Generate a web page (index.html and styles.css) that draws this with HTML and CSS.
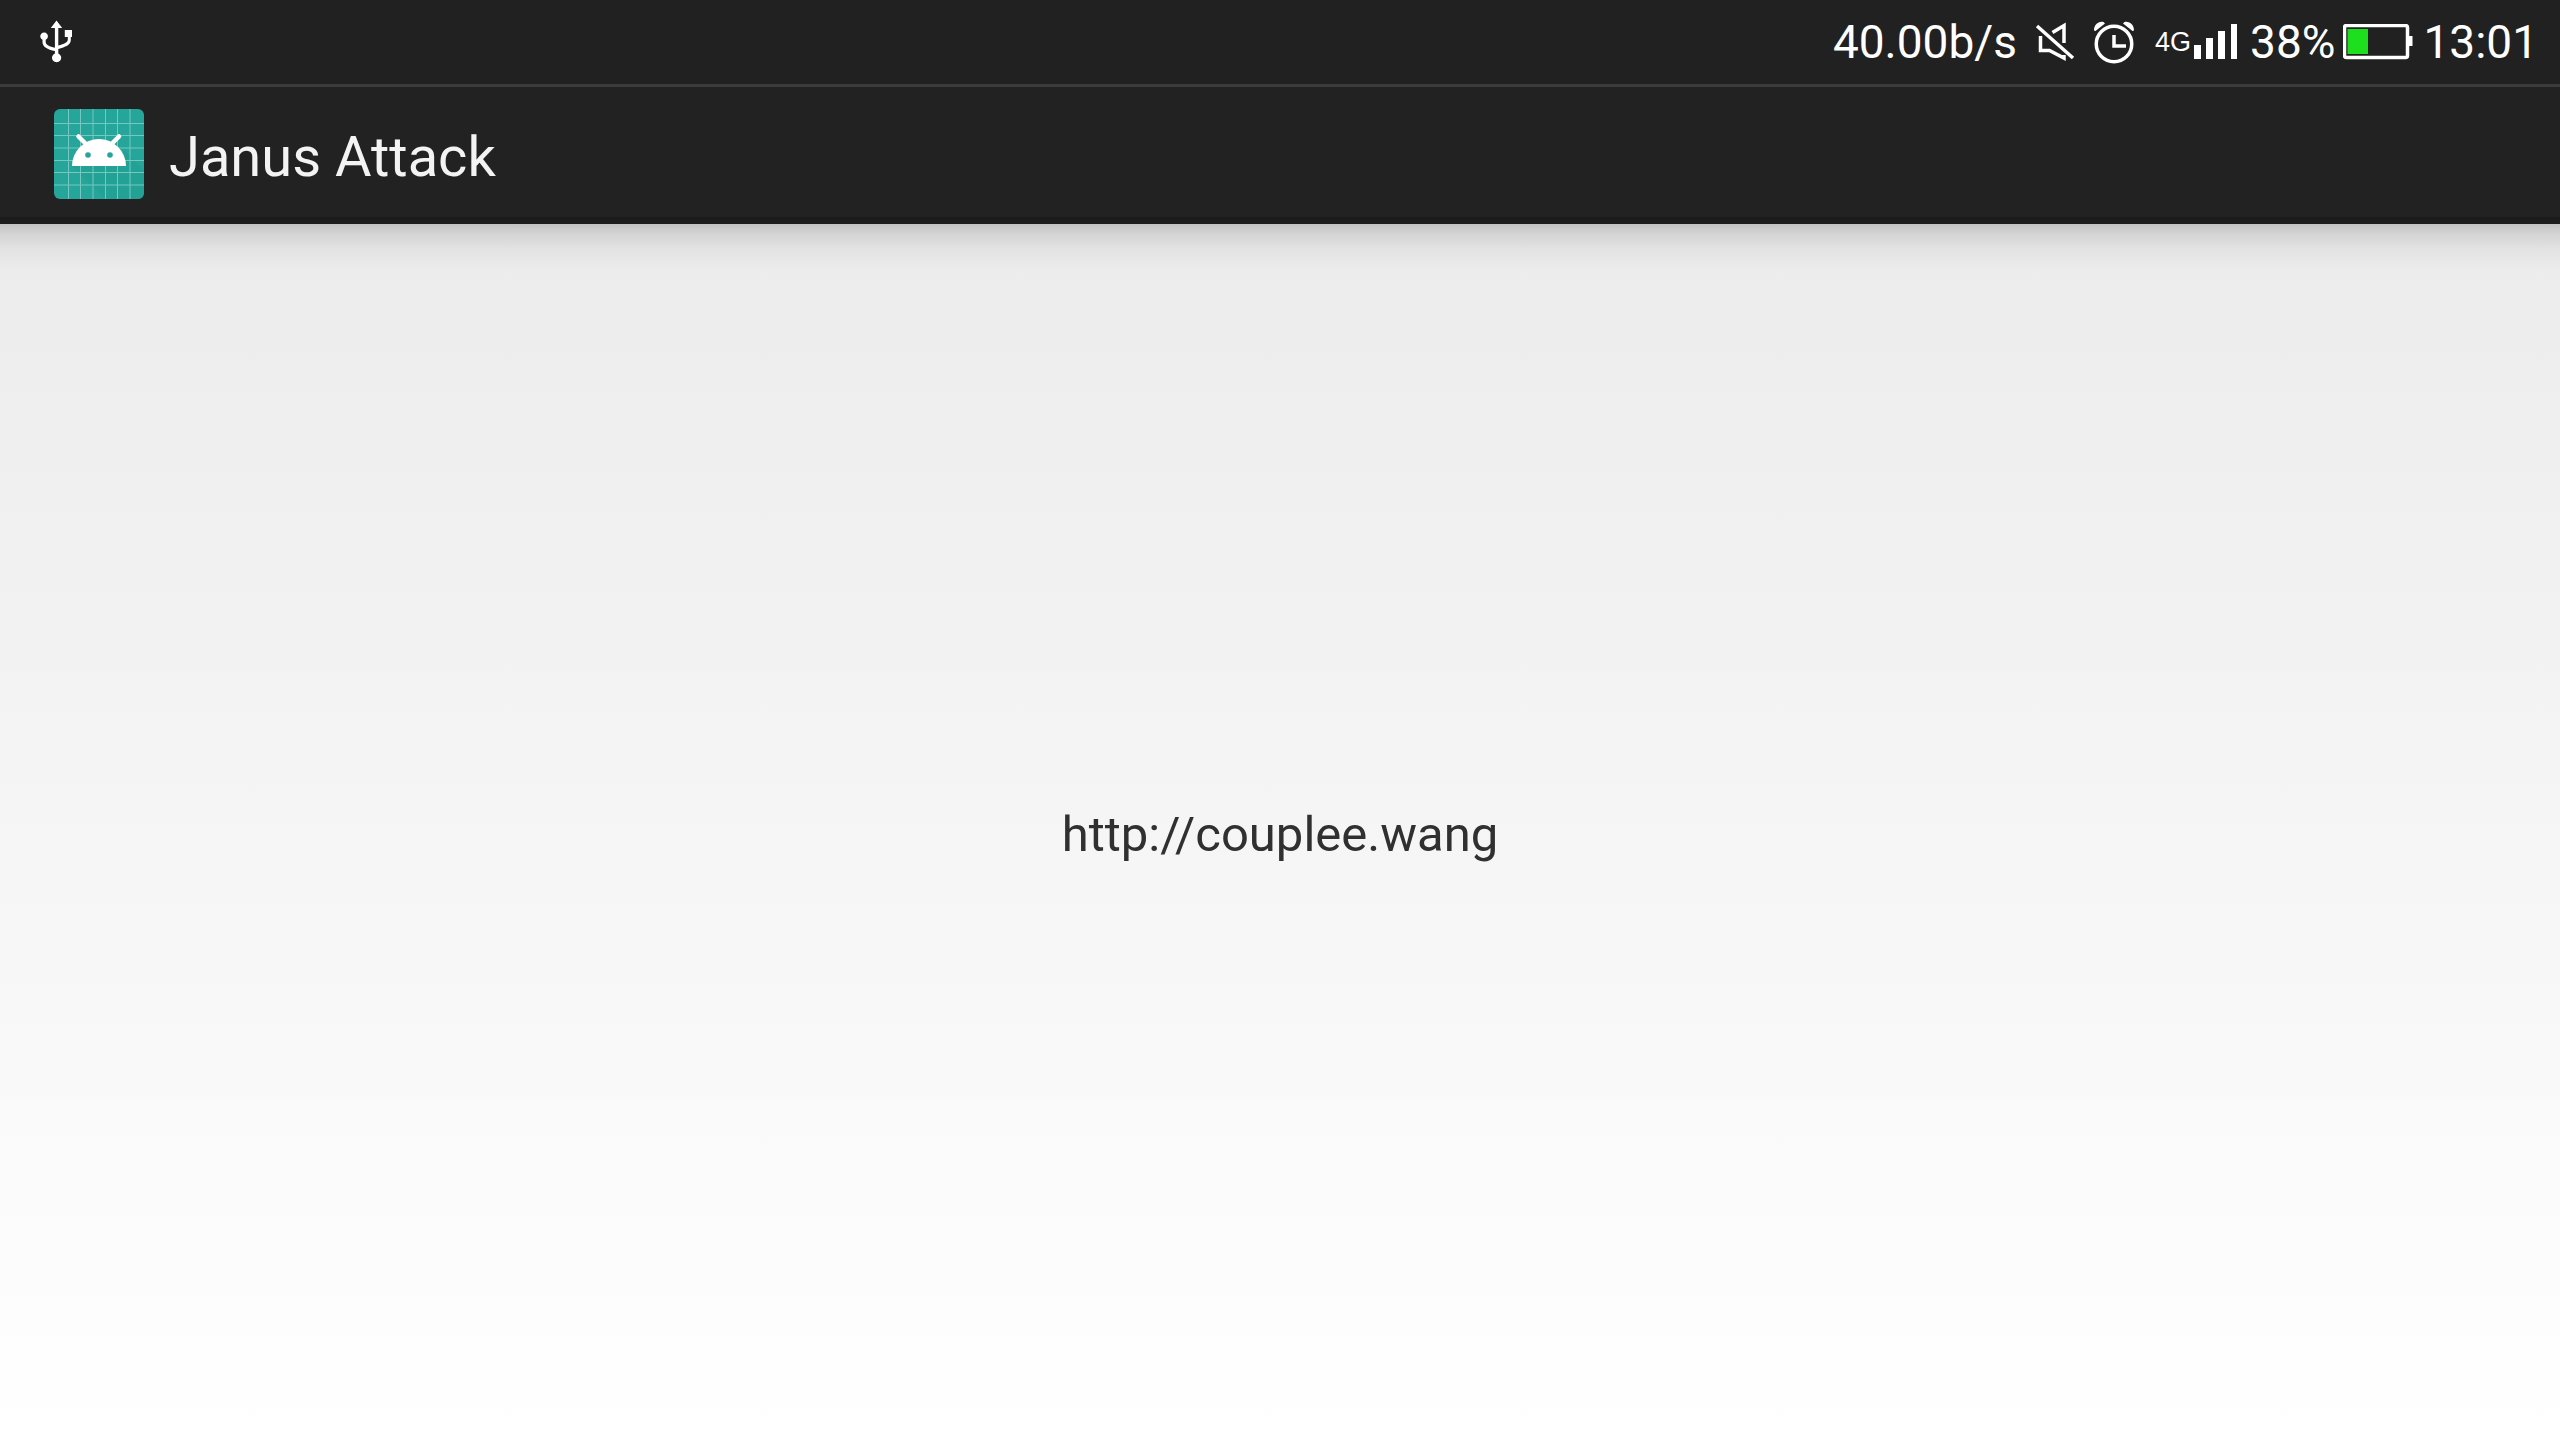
FILE: index.html
```html
<!DOCTYPE html>
<html lang="en">
<head>
<meta charset="utf-8">
<title>Janus Attack</title>
<link rel="stylesheet" href="styles.css">
</head>
<body>
<div class="status-bar">
  <svg class="usb" width="34" height="44" viewBox="0 0 34 44" aria-label="USB connected">
    <path d="M16.500 0.500l5.700 7.500h-3.900v17.500c6-1.500 9.500-3 9.500-6V17h-3v-7h7.200v7h-1.200v3c0 5-5.500 7-12.500 9v4.500a4.600 4.600 0 1 1-3.400 0v-2.500C7.500 29.500 2.500 27 2.500 22v-2.200a3.800 3.800 0 1 1 3.200 0V22c0 3 4 4.500 9.200 5.800V8H10.800z" fill="#fff"/>
  </svg>
  <div class="status-right">
    <span class="speed">40.00b/s</span>
    <svg class="mute" width="40" height="40" viewBox="0 0 40 40" aria-label="Muted" fill="none" stroke="#fff" stroke-width="3.500">
      <path d="M2 4l36 32"/>
      <path d="M5.500 14v14.500h9L29 36v-3M17.500 10.500L29 3.500V21"/>
    </svg>
    <svg class="alarm" width="42" height="44" viewBox="0 0 42 44" aria-label="Alarm set" fill="none" stroke="#fff" stroke-width="3.500">
      <circle cx="21" cy="24" r="17.750"/>
      <path d="M21 15v11h12"/>
      <path d="M1 10.500C1 5 5 1 10.500 2L12 3.500L2.500 11zM41 10.500C41 5 37 1 31.500 2L30 3.500L39.500 11z" fill="#fff" stroke="none"/>
    </svg>
    <span class="network">4G</span>
    <svg class="bars" width="44" height="36" viewBox="0 0 44 36" aria-label="Signal strength" fill="#fff">
      <path d="M0 21h7v14H0zM12 14h7v21h-7zM24 7h7v28h-7zM37 0h6v35h-6z"/>
    </svg>
    <span class="percent">38%</span>
    <svg class="battery" width="70" height="36" viewBox="0 0 70 36" aria-label="Battery">
      <rect x="1.500" y="1.500" width="63" height="32" rx="2" fill="none" stroke="#fff" stroke-width="3.500"/>
      <path d="M65 12h4.500v10H65z" fill="#fff"/>
      <path d="M4.500 5H25v25H4.500z" fill="#1ddf1d"/>
    </svg>
    <time class="clock">13:01</time>
  </div>
</div>
<header class="app-bar">
  <svg class="app-icon" width="90" height="90" viewBox="0 0 90 90" aria-hidden="true">
    <rect width="90" height="90" rx="6" fill="#26a69a"/>
    <path d="M18 57l33 33h33q6 0 6-6V61L69 40 72 57z" fill="#239a8e" opacity=".4"/>
    <path d="M14.500 0v90M26.500 0v90M39 0v90M51.500 0v90M63.500 0v90M76 0v90M0 14.500h90M0 26.500h90M0 39h90M0 51.500h90M0 63.500h90M0 76h90" stroke="#75c7bf" stroke-width="1"/>
    <path d="M24.500 27.500l8 8M65 27.500l-8 8" stroke="#fff" stroke-width="4.500" stroke-linecap="round"/>
    <path d="M18 57a27 27 0 0 1 54 0z" fill="#fff"/>
    <circle cx="34" cy="46" r="2.800" fill="#26a69a"/>
    <circle cx="56" cy="46" r="2.800" fill="#26a69a"/>
  </svg>
  <h1 class="title">Janus Attack</h1>
</header>
<main class="content">
  <p class="address">http://couplee.wang</p>
</main>
</body>
</html>
```
FILE: styles.css
```css
* {
  box-sizing: border-box;
}

body {
  margin: 0;
  min-height: 100vh;
  display: flex;
  flex-direction: column;
  font-family: Roboto, "Noto Sans", sans-serif;
  background: linear-gradient(#e8e8e8, #ffffff);
}

svg {
  display: block;
  flex: none;
}

.status-bar {
  display: flex;
  align-items: center;
  justify-content: space-between;
  height: 84px;
  padding: 0 22px 0 40px;
  background: #212121;
  color: #fff;
  font-size: 46px;
  line-height: 84px;
  white-space: nowrap;
}

.status-right {
  display: flex;
  align-items: center;
}

.mute {
  margin-left: 18px;
}

.alarm {
  margin-left: 18px;
}

.network {
  margin-left: 20px;
  font-family: "Liberation Sans", Arial, sans-serif;
  font-size: 27px;
}

.bars {
  margin-left: 3px;
}

.percent {
  margin-left: 12px;
}

.battery {
  margin-left: 8px;
}

.clock {
  margin-left: 10px;
}

.app-bar {
  display: flex;
  align-items: center;
  gap: 25px;
  height: 140px;
  padding: 4px 54px 0;
  background: #222;
  border-top: 3px solid #3b3b3b;
  border-bottom: 7px solid #1b1b1b;
}

.title {
  margin: 0;
  padding-top: 6px;
  font-size: 56px;
  font-weight: 400;
  line-height: 64px;
  color: #f3f3f3;
}

.content {
  flex: 1;
  display: flex;
  align-items: center;
  justify-content: center;
  padding-top: 6px;
  background: linear-gradient(rgba(0, 0, 0, 0.18), rgba(0, 0, 0, 0.1) 10px, rgba(0, 0, 0, 0.04) 25px, transparent 48px);
}

.address {
  margin: 0;
  font-size: 49px;
  line-height: 60px;
  color: #303030;
}
```
